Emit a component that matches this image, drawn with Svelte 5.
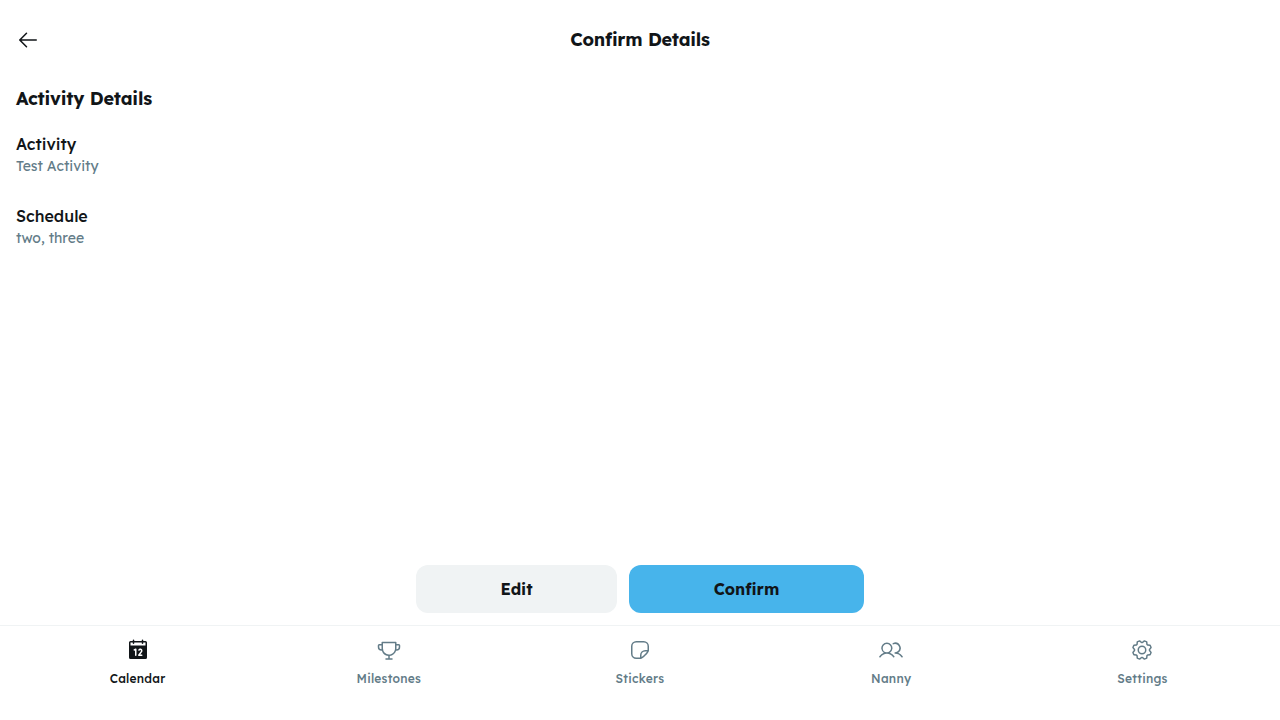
<script>
  const tabs = [
    { label: 'Calendar', active: true, icon: 'M208,32H184V24a8,8,0,0,0-16,0v8H88V24a8,8,0,0,0-16,0v8H48A16,16,0,0,0,32,48V208a16,16,0,0,0,16,16H208a16,16,0,0,0,16-16V48A16,16,0,0,0,208,32ZM112,184a8,8,0,0,1-16,0V132.94l-4.42,2.22a8,8,0,0,1-7.16-14.32l16-8A8,8,0,0,1,112,120Zm56-8a8,8,0,0,1,0,16H136a8,8,0,0,1-6.4-12.8l28.78-38.37A8,8,0,1,0,145.07,132a8,8,0,1,1-13.85-8A24,24,0,0,1,176,136a23.76,23.76,0,0,1-4.84,14.45L152,176ZM48,80V48H72v8a8,8,0,0,0,16,0V48h80v8a8,8,0,0,0,16,0V48h24V80Z' },
    { label: 'Milestones', icon: 'M232,64H208V48a8,8,0,0,0-8-8H56a8,8,0,0,0-8,8V64H24A16,16,0,0,0,8,80V96a40,40,0,0,0,40,40h3.65A80.13,80.13,0,0,0,120,191.61V216H96a8,8,0,0,0,0,16h64a8,8,0,0,0,0-16H136V191.58c31.94-3.23,58.44-25.64,68.08-55.58H208a40,40,0,0,0,40-40V80A16,16,0,0,0,232,64ZM48,120A24,24,0,0,1,24,96V80H48v32q0,4,.39,8Zm144-8.9c0,35.52-29,64.64-64,64.9a64,64,0,0,1-64-64V56H192ZM232,96a24,24,0,0,1-24,24h-.5a81.81,81.81,0,0,0,.5-8.9V80h24Z' },
    { label: 'Stickers', icon: 'M168,32H88A56.06,56.06,0,0,0,32,88v80a56.06,56.06,0,0,0,56,56h48a8.07,8.07,0,0,0,2.53-.41c26.23-8.75,76.31-58.83,85.06-85.06A8.07,8.07,0,0,0,224,136V88A56.06,56.06,0,0,0,168,32ZM48,168V88A40,40,0,0,1,88,48h80a40,40,0,0,1,40,40v40H184a56.06,56.06,0,0,0-56,56v24H88A40,40,0,0,1,48,168Zm96,35.14V184a40,40,0,0,1,40-40h19.14C191,163.5,163.5,191,144,203.14Z' },
    { label: 'Nanny', icon: 'M117.25,157.92a60,60,0,1,0-66.5,0A95.83,95.83,0,0,0,3.53,195.63a8,8,0,1,0,13.4,8.74,80,80,0,0,1,134.14,0,8,8,0,0,0,13.4-8.74A95.83,95.83,0,0,0,117.25,157.92ZM40,108a44,44,0,1,1,44,44A44.05,44.05,0,0,1,40,108Zm210.14,98.7a8,8,0,0,1-11.07-2.33A79.83,79.83,0,0,0,172,168a8,8,0,0,1,0-16,44,44,0,1,0-16.34-84.87,8,8,0,1,1-5.94-14.85,60,60,0,0,1,55.53,105.64,95.83,95.83,0,0,1,47.22,37.71A8,8,0,0,1,250.14,206.7Z' },
    { label: 'Settings', icon: 'M128,80a48,48,0,1,0,48,48A48.05,48.05,0,0,0,128,80Zm0,80a32,32,0,1,1,32-32A32,32,0,0,1,128,160Zm88-29.84q.06-2.16,0-4.32l14.92-18.64a8,8,0,0,0,1.48-7.06,107.21,107.21,0,0,0-10.88-26.25,8,8,0,0,0-6-3.93l-23.72-2.64q-1.48-1.56-3-3L186,40.54a8,8,0,0,0-3.94-6,107.71,107.71,0,0,0-26.25-10.87,8,8,0,0,0-7.06,1.49L130.16,40Q128,40,125.84,40L107.2,25.11a8,8,0,0,0-7.06-1.48A107.6,107.6,0,0,0,73.89,34.51a8,8,0,0,0-3.93,6L67.32,64.27q-1.56,1.49-3,3L40.54,70a8,8,0,0,0-6,3.94,107.71,107.71,0,0,0-10.87,26.25,8,8,0,0,0,1.49,7.06L40,125.84Q40,128,40,130.16L25.11,148.8a8,8,0,0,0-1.48,7.06,107.21,107.21,0,0,0,10.88,26.25,8,8,0,0,0,6,3.93l23.72,2.64q1.49,1.56,3,3L70,215.46a8,8,0,0,0,3.94,6,107.71,107.71,0,0,0,26.25,10.87,8,8,0,0,0,7.06-1.49L125.84,216q2.16.06,4.32,0l18.64,14.92a8,8,0,0,0,7.06,1.48,107.21,107.21,0,0,0,26.25-10.88,8,8,0,0,0,3.93-6l2.64-23.72q1.56-1.48,3-3L215.46,186a8,8,0,0,0,6-3.94,107.71,107.71,0,0,0,10.87-26.25,8,8,0,0,0-1.49-7.06Zm-16.1-6.5a73.93,73.93,0,0,1,0,8.68,8,8,0,0,0,1.74,5.48l14.19,17.73a91.57,91.57,0,0,1-6.23,15L187,173.11a8,8,0,0,0-5.1,2.64,74.11,74.11,0,0,1-6.14,6.14,8,8,0,0,0-2.64,5.1l-2.51,22.58a91.32,91.32,0,0,1-15,6.23l-17.74-14.19a8,8,0,0,0-5-1.75h-.48a73.93,73.93,0,0,1-8.68,0,8,8,0,0,0-5.48,1.74L100.45,215.8a91.57,91.57,0,0,1-15-6.23L82.89,187a8,8,0,0,0-2.64-5.1,74.11,74.11,0,0,1-6.14-6.14,8,8,0,0,0-5.1-2.64L46.43,170.6a91.32,91.32,0,0,1-6.23-15l14.19-17.74a8,8,0,0,0,1.74-5.48,73.93,73.93,0,0,1,0-8.68,8,8,0,0,0-1.74-5.48L40.2,100.45a91.57,91.57,0,0,1,6.23-15L69,82.89a8,8,0,0,0,5.1-2.64,74.11,74.11,0,0,1,6.14-6.14A8,8,0,0,0,82.89,69L85.4,46.43a91.32,91.32,0,0,1,15-6.23l17.74,14.19a8,8,0,0,0,5.48,1.74,73.93,73.93,0,0,1,8.68,0,8,8,0,0,0,5.48-1.74L155.55,40.2a91.57,91.57,0,0,1,15,6.23L173.11,69a8,8,0,0,0,2.64,5.1,74.11,74.11,0,0,1,6.14,6.14,8,8,0,0,0,5.1,2.64l22.58,2.51a91.32,91.32,0,0,1,6.23,15l-14.19,17.74A8,8,0,0,0,199.87,123.66Z' }
  ];
</script>

<div class="page">
  <main>
    <header>
      <button class="back" aria-label="Back">
        <svg viewBox="0 0 256 256" width="24" height="24"><path d="M224,128a8,8,0,0,1-8,8H59.31l58.35,58.34a8,8,0,0,1-11.32,11.32l-72-72a8,8,0,0,1,0-11.32l72-72a8,8,0,0,1,11.32,11.32L59.31,120H216A8,8,0,0,1,224,128Z" /></svg>
      </button>
      <h1>Confirm Details</h1>
    </header>
    <h2>Activity Details</h2>
    <div class="row">
      <p class="name">Activity</p>
      <p class="value">Test Activity</p>
    </div>
    <div class="row">
      <p class="name">Schedule</p>
      <p class="value">two, three</p>
    </div>
  </main>

  <footer>
    <div class="actions">
      <button class="edit">Edit</button>
      <button class="confirm">Confirm</button>
    </div>
    <nav>
      {#each tabs as tab}
        <a href="#{tab.label}" class:active={tab.active}>
          <span class="icon"><svg viewBox="0 0 256 256" width="24" height="24"><path d={tab.icon} /></svg></span>
          <span class="label">{tab.label}</span>
        </a>
      {/each}
    </nav>
  </footer>
</div>

<style>
  .page {
    height: 100vh;
    display: flex;
    flex-direction: column;
    justify-content: space-between;
    background: #fff;
    color: #111518;
    font-family: Lexend, Inter, sans-serif;
    font-feature-settings: "cv11" 1;
  }
  h1, h2, p { margin: 0; }
  svg { display: block; fill: currentColor; }
  button { border: 0; font: inherit; font-feature-settings: inherit; color: inherit; cursor: pointer; }
  header { display: flex; align-items: center; height: 48px; padding: 16px 16px 8px; }
  .back { display: flex; align-items: center; width: 48px; height: 48px; padding: 0; background: none; }
  h1 {
    flex: 1;
    padding-right: 48px;
    text-align: center;
    font-size: 18px;
    font-weight: 700;
    line-height: 22.5px;
    letter-spacing: -0.25px;
  }
  h2 { padding: 16px 16px 8px; font-size: 18px; font-weight: 700; line-height: 22.5px; letter-spacing: -0.2px; }
  .row { display: flex; flex-direction: column; justify-content: center; height: 72px; padding: 0 16px; }
  .name { font-size: 16px; font-weight: 500; line-height: 24px; }
  .value { font-size: 14px; line-height: 21px; color: #637c88; }
  .actions { display: grid; grid-template-columns: 201px 235px; justify-content: center; gap: 12px; padding: 12px 16px; }
  .actions button { height: 48px; border-radius: 12px; font-size: 16px; font-weight: 700; letter-spacing: 0; }
  .actions .edit { background: #f0f3f4; }
  .actions .confirm { background: #47b4eb; }
  nav { display: flex; gap: 8px; padding: 8px 16px 32px; border-top: 1px solid #f0f3f4; }
  a { flex: 1 1 0; display: flex; flex-direction: column; align-items: center; gap: 4px; color: #637c88; text-decoration: none; }
  a.active { color: #111518; }
  .icon { display: flex; align-items: center; height: 32px; }
  .label { font-size: 12px; font-weight: 500; line-height: 18px; letter-spacing: 0.02em; }
</style>
